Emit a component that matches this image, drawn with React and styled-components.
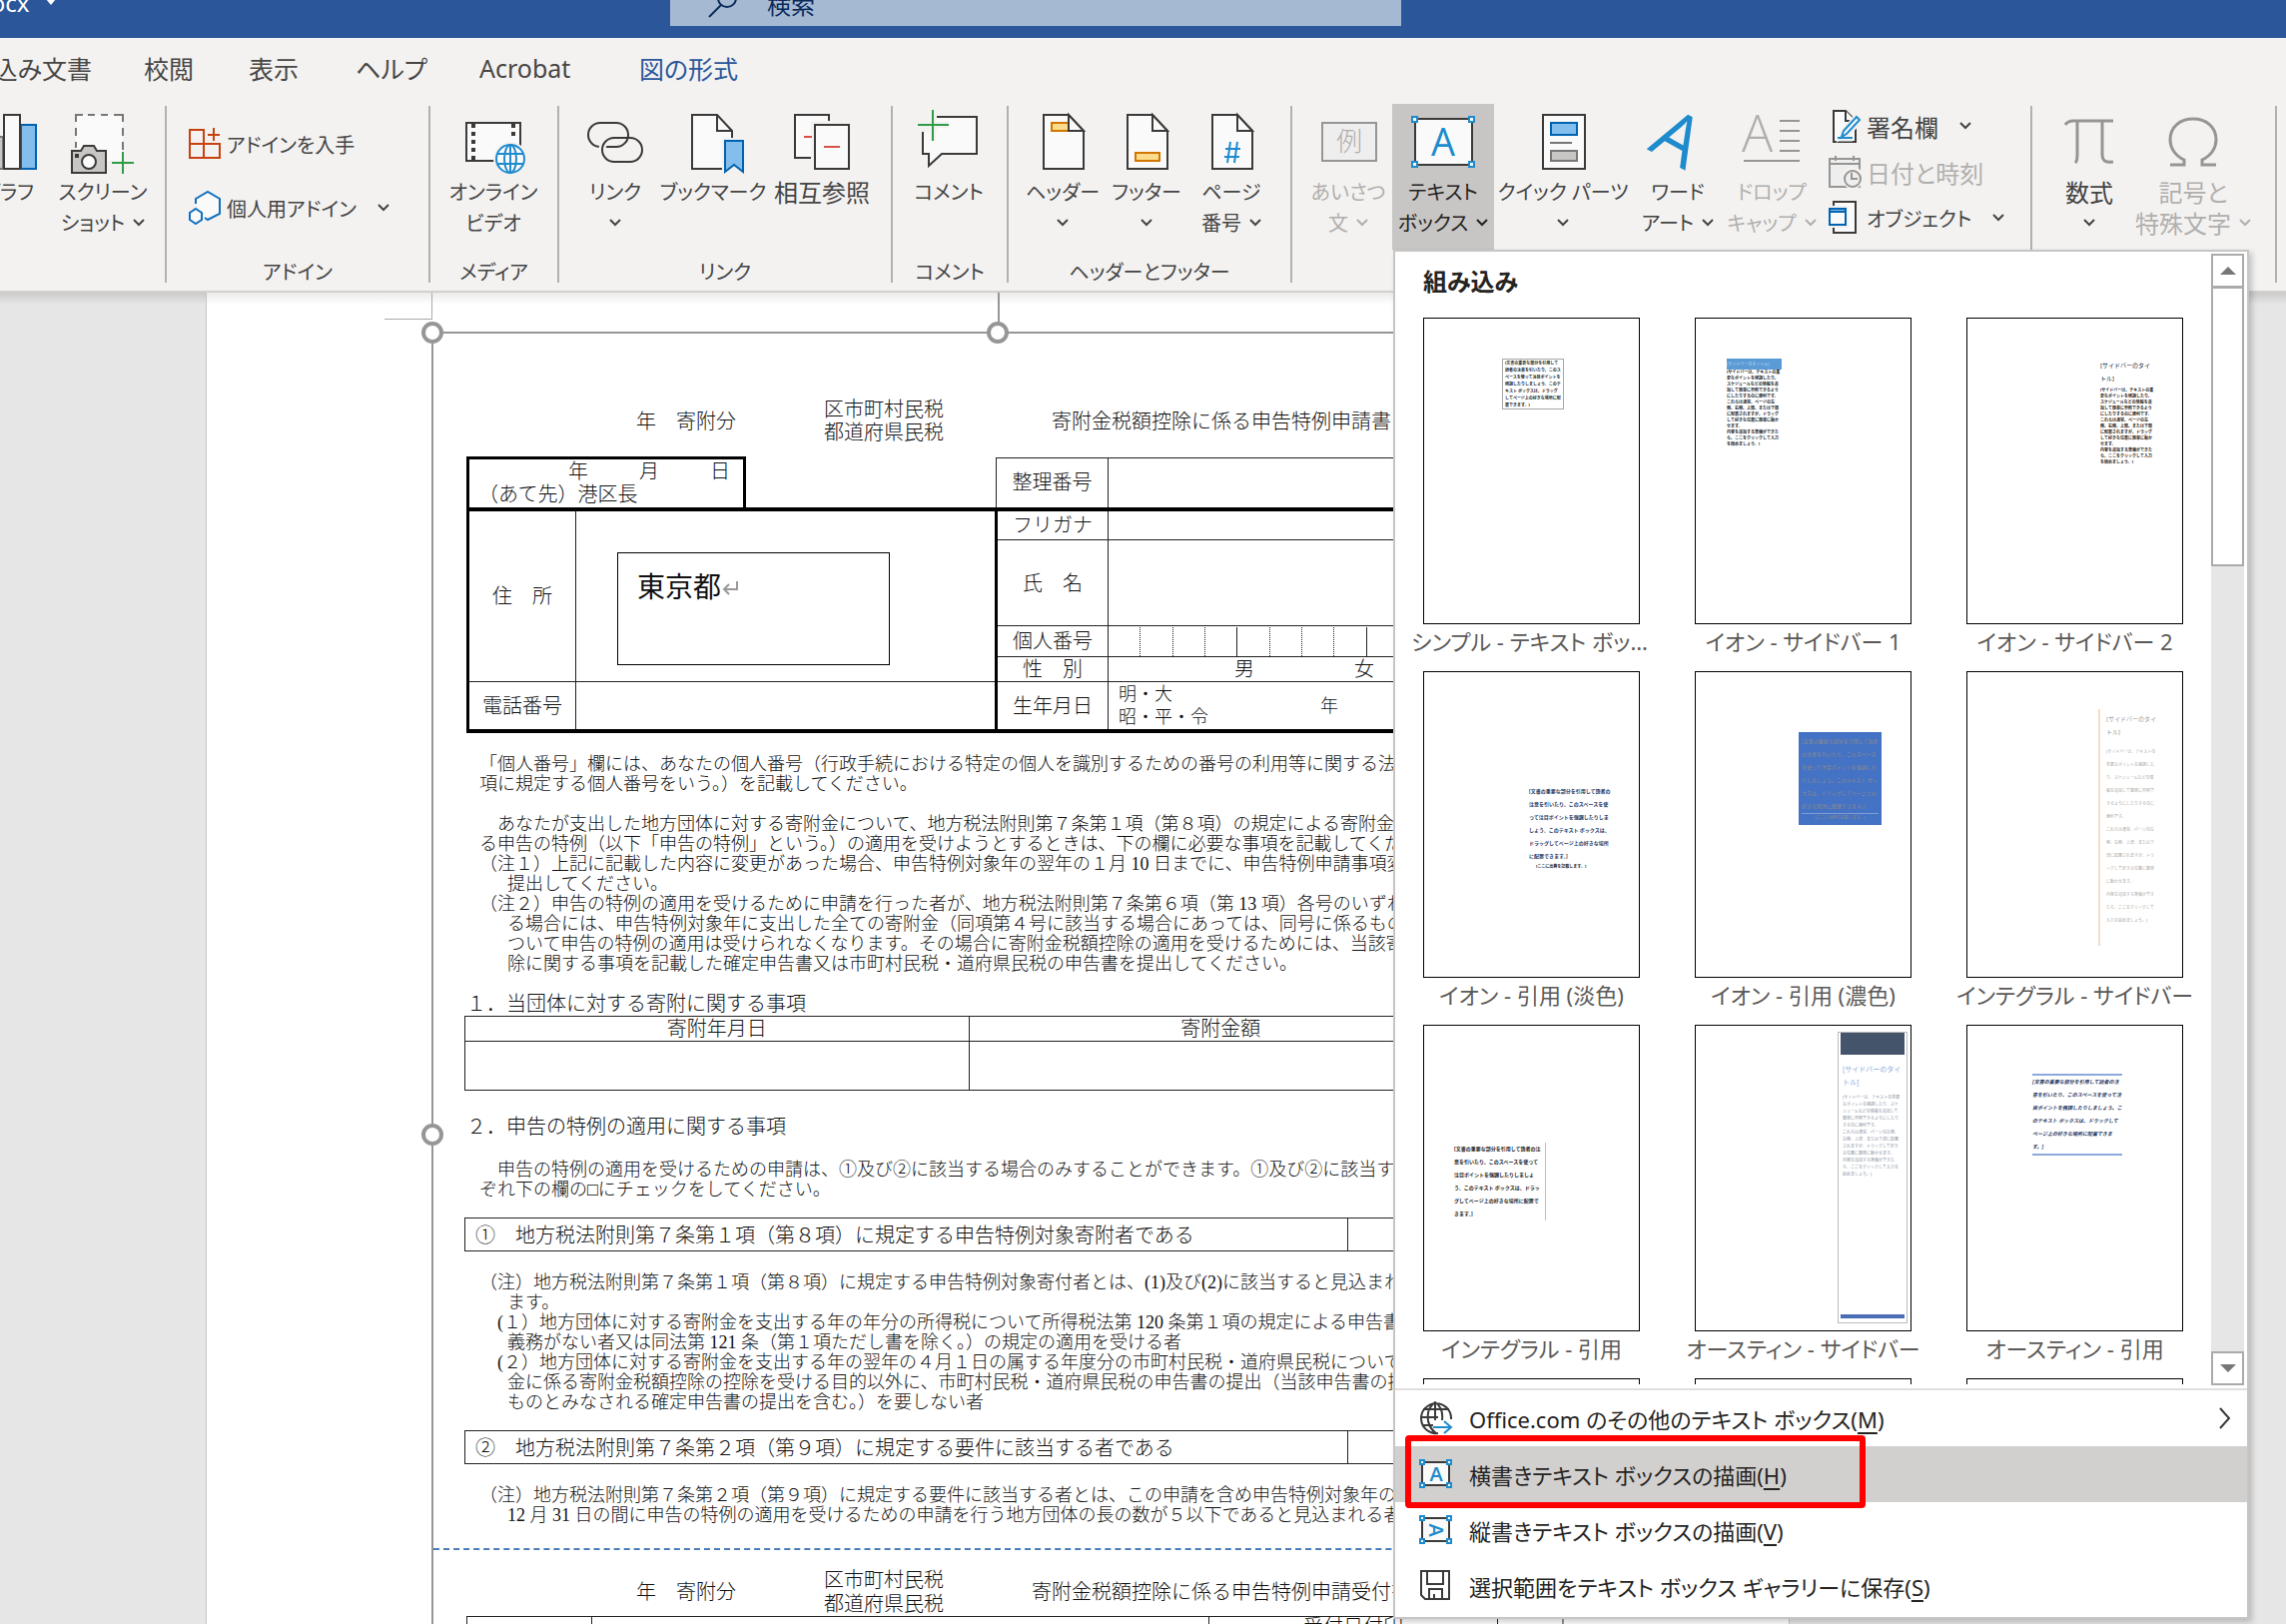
import styled, { createGlobalStyle, css } from "styled-components"

const GlobalStyle = createGlobalStyle`
    * { box-sizing: border-box; }
    body { margin: 0; background: #e6e6e6; }
    button { font: inherit; color: inherit; background: none; border: 0; padding: 0; }
    h2, p { margin: 0; font-weight: inherit; font-size: inherit; }
`

const quote = '[文書の重要な部分を引用して読者の注意を引いたり、このスペースを使って注目ポイントを強調したりしましょう。このテキスト ボックスは、ドラッグしてページ上の好きな場所に配置できます。]'
const sidebar = ['[サイドバーは、テキストの重要なポイントを強調したり、スケジュールなどの情報を追加して簡単に参照できるようにしたりするのに便利です。', 'これらは通常、ページの左側、右側、上部、または下部に配置されますが、ドラッグして好きな位置に簡単に動かせます。', '内容を追加する準備ができたら、ここをクリックして入力を始めましょう。]']
const sidebarTitle = '[サイドバーのタイトル]'

const tabs = [
    {name: '校閲', width: 105},
    {name: '表示', width: 107},
    {name: 'ヘルプ', width: 124},
    {name: 'Acrobat', width: 160},
    {name: '図の形式', width: 104, active: true},
]

const guide = [
    '「個人番号」欄には、あなたの個人番号（行政手続における特定の個人を識別するための番号の利用等に関する法律第２条',
    '項に規定する個人番号をいう。）を記載してください。',
    '',
    '　あなたが支出した地方団体に対する寄附金について、地方税法附則第７条第１項（第８項）の規定による寄附金税額控',
    'る申告の特例（以下「申告の特例」という。）の適用を受けようとするときは、下の欄に必要な事項を記載してください。',
    '（注１）上記に記載した内容に変更があった場合、申告特例対象年の翌年の１月 10 日までに、申告特例申請事項変更届',
    {text: '提出してください。'},
    '（注２）申告の特例の適用を受けるために申請を行った者が、地方税法附則第７条第６項（第 13 項）各号のいずれかに',
    {text: 'る場合には、申告特例対象年に支出した全ての寄附金（同項第４号に該当する場合にあっては、同号に係るものに限'},
    {text: 'ついて申告の特例の適用は受けられなくなります。その場合に寄附金税額控除の適用を受けるためには、当該寄附金'},
    {text: '除に関する事項を記載した確定申告書又は市町村民税・道府県民税の申告書を提出してください。'},
]

const checkGuide = [
    '　申告の特例の適用を受けるための申請は、①及び②に該当する場合のみすることができます。①及び②に該当する場合',
    'ぞれ下の欄の□にチェックをしてください。',
]

const noteOne = [
    '（注）地方税法附則第７条第１項（第８項）に規定する申告特例対象寄付者とは、(1)及び(2)に該当すると見込まれる者',
    {text: 'ます。'},
    '　(１）地方団体に対する寄附金を支出する年の年分の所得税について所得税法第 120 条第１項の規定による申告書の',
    {text: '義務がない者又は同法第 121 条（第１項ただし書を除く。）の規定の適用を受ける者'},
    '　(２）地方団体に対する寄附金を支出する年の翌年の４月１日の属する年度分の市町村民税・道府県民税について、',
    {text: '金に係る寄附金税額控除の控除を受ける目的以外に、市町村民税・道府県民税の申告書の提出（当該申告書の提出'},
    {text: 'ものとみなされる確定申告書の提出を含む。）を要しない者'},
]

const noteTwo = [
    '（注）地方税法附則第７条第２項（第９項）に規定する要件に該当する者とは、この申請を含め申告特例対象年の１月',
    {text: '12 月 31 日の間に申告の特例の適用を受けるための申請を行う地方団体の長の数が５以下であると見込まれる者を'},
]

const Chevron = () => (
    <svg width="12" height="8" viewBox="0 0 12 8" fill="none" stroke="currentColor" strokeWidth="2"><path d="M1 1l5 5 5-5" /></svg>
)

const Page = ({ children }) => (
    <g fill="#fafafa" stroke="#3b3a39" strokeWidth="2">
        <path d="M13 5h25l15 16v38H13z" />
        {children}
        <path d="M38 5v16h15z" />
    </g>
)

const icons = {
    chart: <g strokeWidth="2">
        <path d="M11 27h16v32H11z" fill="#c8c6c4" stroke="#797775" />
        <path d="M45 15h15v44H45z" fill="#83beec" stroke="#0063b1" />
        <path d="M28 5h16v54H28z" fill="#fafafa" stroke="#3b3a39" />
    </g>,
    screenshot: <g fill="none" strokeWidth="2">
        <path d="M5 5h47v46H5z" fill="#fafafa" stroke="none" />
        <path d="M5 12V5h7M17 5h7M30 5h7M43 5h9v7M52 18v8M52 32v8M5 18v8M5 32v6" stroke="#797775" />
        <path d="M1 41h9l3-5h10l3 5h9v22H1z" fill="#c8c6c4" stroke="#3b3a39" />
        <circle cx="18" cy="52" r="7" fill="#fafafa" stroke="#3b3a39" />
        <path d="M4 44h4v4H4z" fill="#3b3a39" />
        <path d="M52 42v22M41 53h22" stroke="#309c48" />
    </g>,
    video: <g fill="none" strokeWidth="2">
        <path d="M5 13h54v38H5z" fill="#fafafa" stroke="#3b3a39" />
        <path d="M12 14v37M52 14v16" stroke="#3b3a39" strokeWidth="4" strokeDasharray="4 4" />
        <circle cx="49" cy="49" r="17" fill="#f3f2f1" />
        <g stroke="#1e8bcd"><circle cx="49" cy="49" r="14" fill="#fafafa" /><ellipse cx="49" cy="49" rx="6" ry="14" /><path d="M49 35v28M36 44h26M36 54h26" /></g>
    </g>,
    link: <g fill="none" stroke="#3b3a39" strokeWidth="2">
        <rect x="5" y="13" width="40" height="24" rx="12" />
        <rect x="19" y="28" width="40" height="24" rx="12" stroke="#f3f2f1" strokeWidth="7" />
        <rect x="19" y="28" width="40" height="24" rx="12" />
        <path d="M43 32a12 12 0 0 1-10 5h-8" stroke="#f3f2f1" strokeWidth="6" />
        <path d="M45 24a12 12 0 0 1-12 13h-8" />
    </g>,
    bookmark: <g>
        <path d="M11 5h25l15 16v38H11z" fill="#fafafa" stroke="#3b3a39" strokeWidth="2" />
        <path d="M36 5v16h15" fill="none" stroke="#3b3a39" strokeWidth="2" />
        <path d="M41 28h25v38H41z" fill="#f3f2f1" />
        <path d="M44 31h18v31l-9-7-9 7z" fill="#83beec" stroke="#0063b1" strokeWidth="2" />
    </g>,
    cross: <g fill="#fafafa" stroke="#3b3a39" strokeWidth="2">
        <path d="M5 5h34v43H5z" /><path d="M21 11h40v51H21z" fill="#f3f2f1" stroke="none" />
        <path d="M25 15h34v44H25z" /><path d="M14 27h8M34 37h16" stroke="#d65248" />
    </g>,
    comment: <g fill="none" strokeWidth="2">
        <path d="M6 7h54v37H25L12 56V44H6z" fill="#fafafa" stroke="#3b3a39" />
        <path d="M0 0h20v22H0z" fill="#f3f2f1" />
        <path d="M16 0v31M1 15h31" stroke="#f3f2f1" strokeWidth="6" />
        <path d="M16 0v31M1 15h31" stroke="#309c48" />
    </g>,
    header: <Page><path d="M21 13h17v8H21z" fill="#fbdb8c" stroke="#d47500" /></Page>,
    footer: <Page><path d="M21 43h24v8H21z" fill="#fbdb8c" stroke="#d47500" /></Page>,
    number: <Page><path d="M31 32l-3 21M38 32l-3 21M26 39h15M25 47h15" stroke="#1e8bcd" /></Page>,
    greeting: <g>
        <path d="M6 13h54v38H6z" fill="#eee" stroke="#979593" strokeWidth="2" />
        <text x="33" y="41" textAnchor="middle" fontSize="26" fontWeight="300" fill="#b1afad">例</text>
    </g>,
    textbox: <g fill="#fafafa" strokeWidth="2">
        <path d="M4 9h57v46H4z" stroke="#3b3a39" />
        <text x="32" y="46" textAnchor="middle" fontSize="38" fontFamily="Open Sans" fill="#1e8bcd">A</text>
        <path d="M1 7h5v5H1zM58 7h5v5h-5zM1 52h5v5H1zM58 52h5v5h-5z" stroke="#1e8bcd" />
    </g>,
    parts: <g fill="#fafafa" strokeWidth="2">
        <path d="M12 5h42v54H12z" stroke="#3b3a39" />
        <path d="M20 13h26v12H20z" fill="#83beec" stroke="#0063b1" />
        <path d="M19 33h22" stroke="#797775" />
        <path d="M20 41h26v10H20z" fill="#c8c6c4" stroke="#797775" />
    </g>,
    wordart: <text x="20" y="50" textAnchor="middle" fontSize="70" fontFamily="Open Sans" fill="#1e8bcd" transform="rotate(29 20 50)">A</text>,
    dropcap: <g stroke="#979593" strokeWidth="2">
        <text x="2" y="42" fontSize="52" fontFamily="Open Sans" fontWeight="300" fill="#b1afad" stroke="none">A</text>
        <path d="M40 11h20M40 21h20M40 31h20M40 41h20M4 51h56" />
    </g>,
    pi: <g fill="none" stroke="#979593" strokeWidth="3">
        <path d="M8 15c2-3 4-4 8-4h40M20 11v34c0 5-1 7-2 8M45 11v33c0 7 3 9 11 8" />
    </g>,
    omega: <path d="M9 55h14v-5C14 46 9 38 9 30 9 17 19 9 32 9s23 8 23 21c0 8-5 16-14 20v5h14" fill="none" stroke="#979593" strokeWidth="3" />,
}

const smallIcons = {
    store: <g fill="none" stroke="#c8410f" strokeWidth="2"><path d="M2 3h14v28H2zM2 17h30v14H2M16 17v14M26 1v13M20 8h12" /></g>,
    addins: <g fill="#fafafa" stroke="#106ebe" strokeWidth="2"><path d="M8 13V8l12-7 12 7v15l-12 6-3-2" /><path d="M8 18l6 4v7l-6 4-6-4v-7z" /></g>,
    sign: <g fill="#fafafa" strokeWidth="2"><path d="M6 2h12l10 10v21H6z" stroke="#3b3a39" /><path d="M18 2v10h10" stroke="#3b3a39" /><path d="M15 24l14-17 4 4-13 15-7 3zM10 30h15" stroke="#f3f2f1" strokeWidth="5" /><path d="M16 22L29 8l3 3-13 14-5 3zM10 29h15" stroke="#1e8bcd" /></g>,
    date: <g fill="#eee" stroke="#979593" strokeWidth="2"><path d="M2 4h30v28H2zM2 9h30M8 1v5M26 1v5" /><circle cx="25" cy="23" r="11" fill="#f3f2f1" stroke="none" /><circle cx="25" cy="24" r="8" /><path d="M24 18v6h6" /></g>,
    object: <g fill="#fafafa" strokeWidth="2"><path d="M6 1h22v31H6z" stroke="#3b3a39" /><path d="M0 5h21v22H0z" fill="#f3f2f1" /><path d="M2 8h16v16H2z" stroke="#0063b1" /><path d="M2 8h16v3H2z" fill="#83beec" stroke="#0063b1" /></g>,
    globe: <g fill="none" stroke="#3b3a39" strokeWidth="2"><path d="M19 32a15 15 0 1 1 13-14M16 1v18M1 16h18M4 8h26M4 24h10M17 32C6 24 6 8 16 1c6 4 8 10 7 18" /><path d="M14 26h17M25 20l7 6-7 6" stroke="#1e8bcd" /></g>,
    hbox: <g fill="#fafafa" strokeWidth="2"><path d="M3 5h27v23H3z" stroke="#3b3a39" /><text x="17" y="24" textAnchor="middle" fontSize="20" fontWeight="600" fontFamily="Open Sans" fill="#1e8bcd">A</text><path d="M1 3h4v4H1zM28 3h4v4h-4zM1 26h4v4H1zM28 26h4v4h-4z" stroke="#1e8bcd" /></g>,
    vbox: <g fill="#fafafa" strokeWidth="2"><path d="M3 5h27v23H3z" stroke="#3b3a39" /><text x="17" y="24" textAnchor="middle" fontSize="20" fontWeight="600" fontFamily="Open Sans" fill="#1e8bcd" transform="rotate(90 17 17)">A</text><path d="M1 3h4v4H1zM28 3h4v4h-4zM1 26h4v4H1zM28 26h4v4h-4z" stroke="#1e8bcd" /></g>,
    save: <g fill="none" stroke="#3b3a39" strokeWidth="2"><path d="M2 2h28v28H6l-4-4zM8 2v13h16V2M10 30V20h13v10M15 30v-5" /></g>,
}

const SmallSvg = ({ name }) => <svg width="34" height="34" viewBox="0 0 34 34" aria-hidden="true">{smallIcons[name]}</svg>

// a line that ends in "v" gets the drop-down chevron
function BigButton({ icon, lines, width, ...rest }){
    return <Big $width={width} {...rest}>
        <svg width="64" height="66" viewBox="0 0 64 66" aria-hidden="true">{icons[icon]}</svg>
        {lines.map(line => <BigLine key={line}>{line.replace('v', '')}{line.endsWith('v') && <Chevron />}</BigLine>)}
    </Big>
}

function SmallButton({ icon, text, menu, ...rest }){
    return <Small {...rest}>
        <SmallSvg name={icon} />
        <span>{text}</span>
        {menu && <Chevron />}
    </Small>
}

function Thumbnail({ name, children }){
    return <Item>
        <Preview>{children}</Preview>
        <Caption>{name}</Caption>
    </Item>
}

function TextBoxMenu(){
    return <Menu>
        <Scroller>
            <Gallery>
                <MenuTitle>組み込み</MenuTitle>
                <Grid>
                    <Thumbnail name="シンプル - テキスト ボックス">
                        <Sample $x={78} $y={40} $w={62} $line={7} $bold $boxed>{quote}</Sample>
                    </Thumbnail>
                    <Thumbnail name="イオン - サイドバー 1">
                        <Sample $x={31} $y={40} $w={55} $line={11} $color="#bdd6ee" $fill="#5b9bd5">{sidebarTitle}</Sample>
                        <Sample $x={31} $w={55} $line={6} $bold>{sidebar.map(p => <p key={p}>{p}</p>)}</Sample>
                    </Thumbnail>
                    <Thumbnail name="イオン - サイドバー 2">
                        <Sample $x={133} $y={41} $w={54} $size={6} $line={13} $color="#222a35">{sidebarTitle}</Sample>
                        <Sample $x={133} $y={2} $w={54} $line={6} $bold>{sidebar.map(p => <p key={p}>{p}</p>)}</Sample>
                    </Thumbnail>
                    <Thumbnail name="イオン - 引用 (淡色)">
                        <Sample $x={105} $y={113} $w={82} $size={5} $line={13} $color="#1f3864" $bold>{quote}</Sample>
                        <Sample $x={112} $w={60} $line={7} $bold>[ここに出典を記載します。]</Sample>
                    </Thumbnail>
                    <Thumbnail name="イオン - 引用 (濃色)">
                        <Sample $x={103} $y={60} $w={83} $size={5} $line={13} $color="#8c8c8c" $fill="#4472c4" $pad={3}>
                            {quote}
                            <Source>[ここに出典を記載します。]</Source>
                        </Sample>
                    </Thumbnail>
                    <Thumbnail name="インテグラル - サイドバー">
                        <Ruled>
                            <Sample $x={6} $w={50} $size={6} $line={13} $color="#999">{sidebarTitle}</Sample>
                            <Sample $x={6} $y={6} $w={50} $line={13} $color="#aaa">{sidebar.map(p => <p key={p}>{p}</p>)}</Sample>
                        </Ruled>
                    </Thumbnail>
                    <Thumbnail name="インテグラル - 引用">
                        <Sample $x={30} $y={117} $w={92} $size={5} $line={13} $bold $edge="right">{quote}</Sample>
                    </Thumbnail>
                    <Thumbnail name="オースティン - サイドバー">
                        <Panel>
                            <Sample $x={4} $y={8} $w={60} $size={7} $line={13} $color="#8eaadb">{sidebarTitle}</Sample>
                            <Sample $x={4} $y={5} $w={58} $line={7} $color="#8c95a3">{sidebar.map(p => <p key={p}>{p}</p>)}</Sample>
                        </Panel>
                    </Thumbnail>
                    <Thumbnail name="オースティン - 引用">
                        <Sample $x={65} $y={48} $w={90} $size={5} $line={13} $color="#1f3864" $bold $italic $edge="both">{quote}</Sample>
                    </Thumbnail>
                    <Preview /><Preview /><Preview />
                </Grid>
            </Gallery>
            <Bar>
                <BarButton aria-label="上へ"><svg width="16" height="8"><path d="M8 0l8 8H0z" fill="#777" /></svg></BarButton>
                <BarThumb />
                <BarButton aria-label="下へ"><svg width="16" height="8"><path d="M8 8L0 0h16z" fill="#777" /></svg></BarButton>
            </Bar>
        </Scroller>
        <Commands>
            <Command><SmallSvg name="globe" /><span>Office.com のその他のテキスト ボックス(<u>M</u>)</span>
                <svg width="12" height="22" fill="none" stroke="#3b3a39" strokeWidth="2"><path d="M1 1l9 10-9 10" /></svg>
            </Command>
            <Command $active><SmallSvg name="hbox" /><span>横書きテキスト ボックスの描画(<u>H</u>)</span><Marker /></Command>
            <Command><SmallSvg name="vbox" /><span>縦書きテキスト ボックスの描画(<u>V</u>)</span></Command>
            <Command><SmallSvg name="save" /><span>選択範囲をテキスト ボックス ギャラリーに保存(<u>S</u>)</span></Command>
        </Commands>
    </Menu>
}

const Lines = ({ lines }) => (
    <Text>{lines.map((line, i) => line.text ? <Line key={i} $indent>{line.text}</Line> : <Line key={i}>{line}</Line>)}</Text>
)

function Form(){
    return <FormTable>
        <colgroup><col width="108" /><col width="169" /><col width="252" /><col width="112" /><col width="389" /></colgroup>
        <tbody>
            <tr>
                <Cell colSpan="2" $h={51} $pad={9} $thick="top left right bottom">
                    <DateRow><span>年</span><span>月</span><span>日</span></DateRow>
                    （あて先）港区長
                </Cell>
                <Cell $blank $thick="bottom" />
                <Label $thick="bottom">整理番号</Label>
                <Cell $thick="bottom" />
            </tr>
            <tr>
                <Label rowSpan="4" $thick="left">住　所</Label>
                <Cell colSpan="2" rowSpan="4" $thick="right">
                    <TextFrame>東京都<svg width="18" height="18" fill="none" stroke="#999" strokeWidth="2"><path d="M16 2v8H3M8 5l-5 5 5 5" /></svg></TextFrame>
                </Cell>
                <Label $h={31}>フリガナ</Label>
                <Cell />
            </tr>
            <tr><Label $h={86}>氏　名</Label><Cell /></tr>
            <tr>
                <Label $h={31}>個人番号</Label>
                <Cell><Digits>{[...Array(12)].map((_, i) => <i key={i} />)}</Digits></Cell>
            </tr>
            <tr>
                <Label $h={25}>性　別</Label>
                <Cell><Gender><span>男</span><span>女</span></Gender></Cell>
            </tr>
            <tr>
                <Label $h={49} $thick="left bottom">電話番号</Label>
                <Cell colSpan="2" $thick="right bottom" />
                <Label $thick="bottom">生年月日</Label>
                <Cell $thick="bottom"><Birth><div>明・大<br />昭・平・令</div><span>年</span></Birth></Cell>
            </tr>
        </tbody>
    </FormTable>
}

export default function App(){
    return <Window>
        <GlobalStyle />
        <TitleBar>
            <FileName>docx <svg width="10" height="6"><path d="M0 0h10L5 6z" fill="#fff" /></svg></FileName>
            <Search>
                <svg width="30" height="30" fill="none" stroke="#0b2b5c" strokeWidth="2"><circle cx="19" cy="10" r="9" /><path d="M13 17L1 29" /></svg>
                <input aria-label="検索" placeholder="検索" />
            </Search>
        </TitleBar>
        <Ribbon>
            <Tabs>
                <Tab $first>差し込み文書</Tab>
                {tabs.map(tab => <Tab key={tab.name} $width={tab.width} $active={tab.active}>{tab.name}</Tab>)}
            </Tabs>
            <Groups>
                <Group $width={165} $end>
                    <div><BigButton icon="chart" lines={['グラフ']} width={88} /><BigButton icon="screenshot" lines={['スクリーン', 'ショットv']} width={102} /></div>
                </Group>
                <Divider />
                <Group $width={262} $pad={20}>
                    <Stack $gap={30}>
                        <SmallButton icon="store" text="アドインを入手" />
                        <SmallButton icon="addins" text="個人用アドイン" menu />
                    </Stack>
                    <h2>アドイン</h2>
                </Group>
                <Divider />
                <Group $width={127} $pad={9}>
                    <div><BigButton icon="video" lines={['オンライン', 'ビデオ']} width={108} /></div>
                    <h2>メディア</h2>
                </Group>
                <Divider />
                <Group $width={332} $pad={16}>
                    <div>
                        <BigButton icon="link" lines={['リンク', 'v']} width={80} />
                        <BigButton icon="bookmark" lines={['ブックマーク']} width={116} />
                        <BigButton icon="cross" lines={['相互参照']} width={102} $wide />
                    </div>
                    <h2>リンク</h2>
                </Group>
                <Divider />
                <Group $width={114}>
                    <div><BigButton icon="comment" lines={['コメント']} width={112} /></div>
                    <h2>コメント</h2>
                </Group>
                <Divider />
                <Group $width={282} $pad={12}>
                    <div>
                        <BigButton icon="header" lines={['ヘッダー', 'v']} width={84} />
                        <BigButton icon="footer" lines={['フッター', 'v']} width={84} />
                        <BigButton icon="number" lines={['ページ', '番号v']} width={86} />
                    </div>
                    <h2>ヘッダーとフッター</h2>
                </Group>
                <Divider />
                <Group $width={739} $pad={12}>
                    <div>
                        <BigButton icon="greeting" lines={['あいさつ', '文v']} width={88} disabled />
                        <MenuAnchor>
                            <BigButton icon="textbox" lines={['テキスト', 'ボックスv']} width={102} $open />
                            <TextBoxMenu />
                        </MenuAnchor>
                        <BigButton icon="parts" lines={['クイック パーツ', 'v']} width={138} />
                        <BigButton icon="wordart" lines={['ワード', 'アートv']} width={92} />
                        <BigButton icon="dropcap" lines={['ドロップ', 'キャップv']} width={96} disabled />
                        <Stack $gap={12} $tight>
                            <SmallButton icon="sign" text="署名欄" menu $wide />
                            <SmallButton icon="date" text="日付と時刻" disabled $wide />
                            <SmallButton icon="object" text="オブジェクト" menu />
                        </Stack>
                    </div>
                </Group>
                <Divider />
                <Group $width={243} $pad={17}>
                    <div>
                        <BigButton icon="pi" lines={['数式', 'v']} width={80} $wide />
                        <BigButton icon="omega" lines={['記号と', '特殊文字v']} width={128} disabled $wide />
                    </div>
                </Group>
                <Divider />
            </Groups>
        </Ribbon>
        <Workspace>
            <Sheet>
                <Corner />
                <Picture>
                    <Stem />
                    <Handle $at="corner" /><Handle $at="top" /><Handle $at="left" />
                    <Scan>
                        <FormHead $gap={108}>
                            <span>年　寄附分</span><span>区市町村民税<br />都道府県民税</span><span>寄附金税額控除に係る申告特例申請書</span>
                        </FormHead>
                        <Form />
                        <Lines lines={guide} />
                        <Heading>１．当団体に対する寄附に関する事項</Heading>
                        <Donation>
                            <thead><tr><th>寄附年月日</th><th>寄附金額</th></tr></thead>
                            <tbody><tr><td /><td /></tr></tbody>
                        </Donation>
                        <Heading $second>２．申告の特例の適用に関する事項</Heading>
                        <Lines lines={checkGuide} />
                        <CheckBox>①　地方税法附則第７条第１項（第８項）に規定する申告特例対象寄附者である</CheckBox>
                        <Lines lines={noteOne} />
                        <CheckBox>②　地方税法附則第７条第２項（第９項）に規定する要件に該当する者である</CheckBox>
                        <Lines lines={noteTwo} />
                    </Scan>
                    <CutLine />
                    <Scan>
                        <FormHead $gap={88} $receipt>
                            <span>年　寄附分</span><span>区市町村民税<br />都道府県民税</span><span>寄附金税額控除に係る申告特例申請受付書</span>
                        </FormHead>
                        <Receipt><div /><div /><div>受付日付印</div></Receipt>
                    </Scan>
                </Picture>
            </Sheet>
        </Workspace>
    </Window>
}

const Window = styled.div`
    height: 100vh;
    display: flex;
    flex-direction: column;
    overflow: hidden;
    font-family: "Noto Sans", "Noto Sans CJK JP", sans-serif;
    font-size: 22px;
    font-feature-settings: "palt";
    color: #444;
`

const TitleBar = styled.header`
    flex: none;
    height: 38px;
    display: flex;
    background: #2b579a;
    color: #fff;
`

const FileName = styled.div`
    flex: 0 0 671px;
    display: flex;
    align-items: center;
    gap: 16px;
    height: 4px;
    margin-left: -24px;
    margin-right: 24px;
    font-size: 24px;
`

const Search = styled.label`
    width: 732px;
    height: 26px;
    padding-left: 38px;
    display: flex;
    align-items: flex-start;
    gap: 29px;
    background: #a6b9d2;
    overflow: hidden;

    svg{
        flex: none;
        margin-top: -12px;
    }

    input{
        width: 400px;
        height: 36px;
        margin-top: -14px;
        padding: 0;
        border: 0;
        background: none;
        font: inherit;
        font-size: 24px;
    }

    input::placeholder{
        color: #0b2b5c;
    }
`

const Ribbon = styled.section`
    flex: none;
    position: relative;
    z-index: 2;
    background: #f3f2f1;
    border-bottom: 2px solid #d2d0ce;
`

const Tabs = styled.nav`
    display: flex;
    height: 66px;
    padding-bottom: 6px;
    font-size: 25px;
`

const Tab = styled.button`
    flex: none;
    width: ${props => props.$first ? '92px' : props.$width + 'px'};
    margin-right: ${props => props.$first ? '52px' : 0};
    display: flex;
    justify-content: ${props => props.$first ? 'flex-end' : 'flex-start'};
    align-items: center;
    white-space: nowrap;
    color: ${props => props.$active ? '#2b579a' : '#484644'};
`

const Groups = styled.div`
    display: flex;
    height: 187px;
`

const Group = styled.section`
    flex: none;
    position: relative;
    width: ${props => props.$width}px;
    display: flex;
    flex-direction: column;

    > div{
        display: flex;
        justify-content: ${props => props.$end ? 'flex-end' : 'flex-start'};
        height: 154px;
        padding-left: ${props => props.$pad || 0}px;
        padding-right: ${props => props.$end ? 11 : 0}px;
    }

    h2{
        height: 30px;
        line-height: 30px;
        font-size: 20px;
        text-align: center;
    }
`

const Divider = styled.div`
    flex: none;
    width: 2px;
    height: 177px;
    margin-top: 2px;
    background: #b3b0ad;
`

const Big = styled.button`
    flex: none;
    width: ${props => props.$width}px;
    height: 146px;
    padding-top: 6px;
    display: flex;
    flex-direction: column;
    align-items: center;
    white-space: nowrap;
    font-size: ${props => props.$wide ? 24 : 20}px;
    background: ${props => props.$open ? '#c8c6c4' : 'none'};
    color: ${props => props.disabled ? '#b1afad' : props.$open ? '#252423' : '#444'};
`

const BigLine = styled.span`
    display: flex;
    align-items: center;
    gap: 8px;
    height: 31px;
`

const Stack = styled.div`
    && {
        flex-direction: column;
        justify-content: flex-start;
        gap: ${props => props.$gap}px;
        padding-top: ${props => props.$tight ? 5 : 23}px;
        padding-left: ${props => props.$tight ? 8 : 21}px;
    }
    display: flex;
`

const Small = styled.button`
    display: flex;
    align-items: center;
    gap: 5px;
    height: 34px;
    white-space: nowrap;
    font-size: ${props => props.$wide ? 24 : 20}px;
    color: ${props => props.disabled ? '#b1afad' : '#444'};

    svg + span + svg{
        margin-left: 16px;
    }
`

const MenuAnchor = styled.div`
    position: relative;
`

const Menu = styled.div`
    position: absolute;
    top: 146px;
    left: 1px;
    width: 857px;
    background: #fff;
    border: 2px solid #c8c6c4;
    box-shadow: 3px 3px 6px rgba(0, 0, 0, .2);
    color: #252423;
`

const Scroller = styled.div`
    display: flex;
    height: 1140px;
    padding: 4px 3px 4px 0;
    border-bottom: 2px solid #e1dfdd;
`

const Gallery = styled.div`
    flex: 1;
    padding-left: 28px;
    overflow: hidden;
`

const MenuTitle = styled.div`
    height: 62px;
    line-height: 52px;
    font-size: 24px;
    font-weight: 700;
`

const Grid = styled.div`
    display: grid;
    grid-template-columns: repeat(3, 217px);
    column-gap: 55px;
    grid-auto-rows: 354px;
`

const Item = styled.figure`
    margin: 0;
`

const Preview = styled.div`
    width: 217px;
    height: 307px;
    border: 1px solid #000;
    display: flow-root;
    font-feature-settings: normal;
`

const Caption = styled.figcaption`
    margin: 0 -12px;
    line-height: 34px;
    text-align: center;
    white-space: nowrap;
    overflow: hidden;
    text-overflow: ellipsis;
    color: #5c5a58;
`

const Sample = styled.div`
    width: ${props => props.$w}px;
    margin-left: ${props => props.$x}px;
    margin-top: ${props => props.$y || 0}px;
    padding: ${props => props.$pad || 0}px;
    font-size: ${props => props.$size || 4}px;
    line-height: ${props => props.$line}px;
    font-weight: ${props => props.$bold ? 700 : 400};
    font-style: ${props => props.$italic ? 'italic' : 'normal'};
    color: ${props => props.$color || '#222'};
    background: ${props => props.$fill || 'none'};
    word-break: break-all;
    ${props => props.$boxed && css`
        padding: 0 2px;
        border: 1px solid #a6a6a6;
    `}
    ${props => props.$edge === 'right' && css`
        padding-right: 3px;
        border-right: 1px solid #f4b183;
    `}
    ${props => props.$edge === 'both' && css`
        border: solid #8eaadb;
        border-width: 2px 0;
    `}
`

const Source = styled.p`
    border-top: 1px solid #7f9bd3;
    font-size: 4px;
    line-height: 8px;
    text-align: center;
`

const Ruled = styled.div`
    margin: 37px 0 0 131px;
    height: 237px;
    border-left: 2px solid #f4dccb;
    padding-top: 4px;
`

const Panel = styled.div`
    width: 70px;
    height: 292px;
    margin: 6px 0 0 142px;
    border: 1px solid #bbb;
    display: flow-root;
    position: relative;

    &::before{
        content: '';
        display: block;
        height: 22px;
        margin: 0 2px;
        background: #44546a;
    }

    &::after{
        content: '';
        position: absolute;
        left: 2px;
        right: 2px;
        bottom: 4px;
        height: 4px;
        background: #4a6db5;
    }
`

const Bar = styled.div`
    width: 33px;
    display: flex;
    flex-direction: column;
    background: #e6e6e6;
    margin: -2px 0 -1px;
`

const BarButton = styled.button`
    height: 34px;
    flex: none;
    display: flex;
    align-items: center;
    justify-content: center;
    background: #fff;
    border: 2px solid #ababab;

    &:last-child{
        margin-top: auto;
    }
`

const BarThumb = styled.div`
    height: 280px;
    margin-top: -1px;
    background: #fff;
    border: 2px solid #ababab;
`

const Commands = styled.div`
    padding-bottom: 3px;
`

const Command = styled.button`
    position: relative;
    width: 100%;
    height: 56px;
    padding: 0 16px 0 24px;
    display: flex;
    align-items: center;
    gap: 16px;
    font-size: 22px;
    text-align: left;
    background: ${props => props.$active ? '#d2d0ce' : 'none'};

    u{
        text-underline-offset: 4px;
        text-decoration-thickness: 2px;
    }

    span{
        flex: 1;
    }
`

const Marker = styled.div`
    position: absolute;
    left: 10px;
    top: -11px;
    width: 461px;
    height: 73px;
    border: 6px solid #fe0000;
    border-radius: 4px;
`

const Workspace = styled.main`
    flex: 1;
    min-height: 0;
    overflow: hidden;
    background: linear-gradient(rgba(0, 0, 0, .12), transparent 12px) #e6e6e6;
    font-family: "Liberation Serif", "Noto Sans CJK JP", serif;
    font-feature-settings: normal;
    font-weight: 300;
    color: #111;
`

const Sheet = styled.article`
    width: 1586px;
    min-height: 2244px;
    margin-left: 206px;
    padding: 39px 225px;
    position: relative;
    border: solid #c6c6c6;
    border-width: 0 1px;
    background: linear-gradient(rgba(0, 0, 0, .08), transparent 12px) #fff;
`

const Corner = styled.div`
    position: absolute;
    top: 0;
    left: 178px;
    width: 48px;
    height: 27px;
    border: solid #aaa;
    border-width: 0 1px 1px 0;
`

const Picture = styled.div`
    position: relative;
    border: 2px solid #969696;
    min-height: 1608px;
`

const Stem = styled.div`
    position: absolute;
    top: -41px;
    left: 50%;
    width: 2px;
    height: 40px;
    background: #969696;
`

const Handle = styled.div`
    position: absolute;
    top: ${props => props.$at === 'left' ? '50%' : '-1px'};
    left: ${props => props.$at === 'top' ? '50%' : '-1px'};
    width: 22px;
    height: 22px;
    margin: -11px;
    border: 4px solid #969696;
    border-radius: 50%;
    background: #fff;
`

const Scan = styled.div`
    padding-left: 33px;
    overflow: hidden;
    white-space: nowrap;
    font-size: 20px;
`

const FormHead = styled.div`
    display: flex;
    align-items: center;
    padding-top: ${props => props.$receipt ? 18 : 65}px;
    padding-left: 170px;
    line-height: ${props => props.$receipt ? 24 : 23}px;

    span + span{
        margin-left: 88px;
    }

    span + span + span{
        margin-left: ${props => props.$gap}px;
    }
`

const FormTable = styled.table`
    width: 1030px;
    margin-top: 12px;
    table-layout: fixed;
    border-collapse: collapse;
`

const Cell = styled.td`
    height: ${props => props.$h ? props.$h + 'px' : 'auto'};
    padding: 1px 0 0 ${props => props.$pad || 0}px;
    line-height: 23px;
    border: ${props => props.$blank ? 0 : '1px solid #222'};
    ${props => (props.$thick || '').split(' ').filter(Boolean).map(side => `border-${side}: ${side === 'bottom' ? 4 : 3}px solid #000;`)}
`

const Label = styled(Cell).attrs({ as: 'th' })`
    font-weight: inherit;
    text-align: center;
`

const DateRow = styled.div`
    display: flex;
    gap: 51px;
    padding-left: 90px;
`

const TextFrame = styled.div`
    width: 273px;
    height: 113px;
    margin: 24px 0 0 41px;
    padding: 18px 19px;
    border: 1px solid #000;
    font-size: 28px;
    line-height: 34px;
    font-weight: 400;
`

const Digits = styled.div`
    display: grid;
    grid-template-columns: repeat(12, 1fr);
    height: 29px;

    i{
        border-right: 1px dotted #222;
    }

    i:nth-child(4n){
        border-right-style: solid;
    }
`

const Gender = styled.div`
    display: flex;
    gap: 100px;
    padding-left: 126px;
`

const Birth = styled.div`
    display: flex;
    align-items: center;
    padding-left: 10px;
    font-size: 18px;

    div{
        width: 202px;
    }
`

const Text = styled.div`
    margin: 21px 0 18px 13px;
    font-size: 18px;
    line-height: 20px;
`

const Line = styled.p`
    min-height: 20px;
    padding-left: ${props => props.$indent ? 28 : 0}px;
`

const Heading = styled.h2`
    line-height: 24px;
    margin-top: ${props => props.$second ? 24 : 0}px;
`

const Donation = styled.table`
    width: 1010px;
    margin-left: -2px;
    table-layout: fixed;
    border-collapse: collapse;

    th, td{
        height: 24px;
        padding: 0;
        line-height: 24px;
        font-weight: inherit;
        border: 1px solid #222;
    }

    td{
        height: 49px;
    }
`

const CheckBox = styled.div`
    width: 1010px;
    height: 34px;
    margin-left: -2px;
    padding-left: 10px;
    line-height: 34px;
    border: 1px solid #222;
    display: flex;
    justify-content: space-between;

    &::after{
        content: '';
        width: 124px;
        border-left: 1px solid #222;
    }
`

const CutLine = styled.div`
    margin-top: 5px;
    border-top: 2px dashed #4a7ebb;
`

const Receipt = styled.div`
    display: grid;
    grid-template-columns: 124px 618px 289px;
    height: 60px;
    width: 1033px;
    border: 1px solid #222;

    div + div{
        border-left: 1px solid #222;
        text-align: center;
        line-height: 20px;
    }
`
